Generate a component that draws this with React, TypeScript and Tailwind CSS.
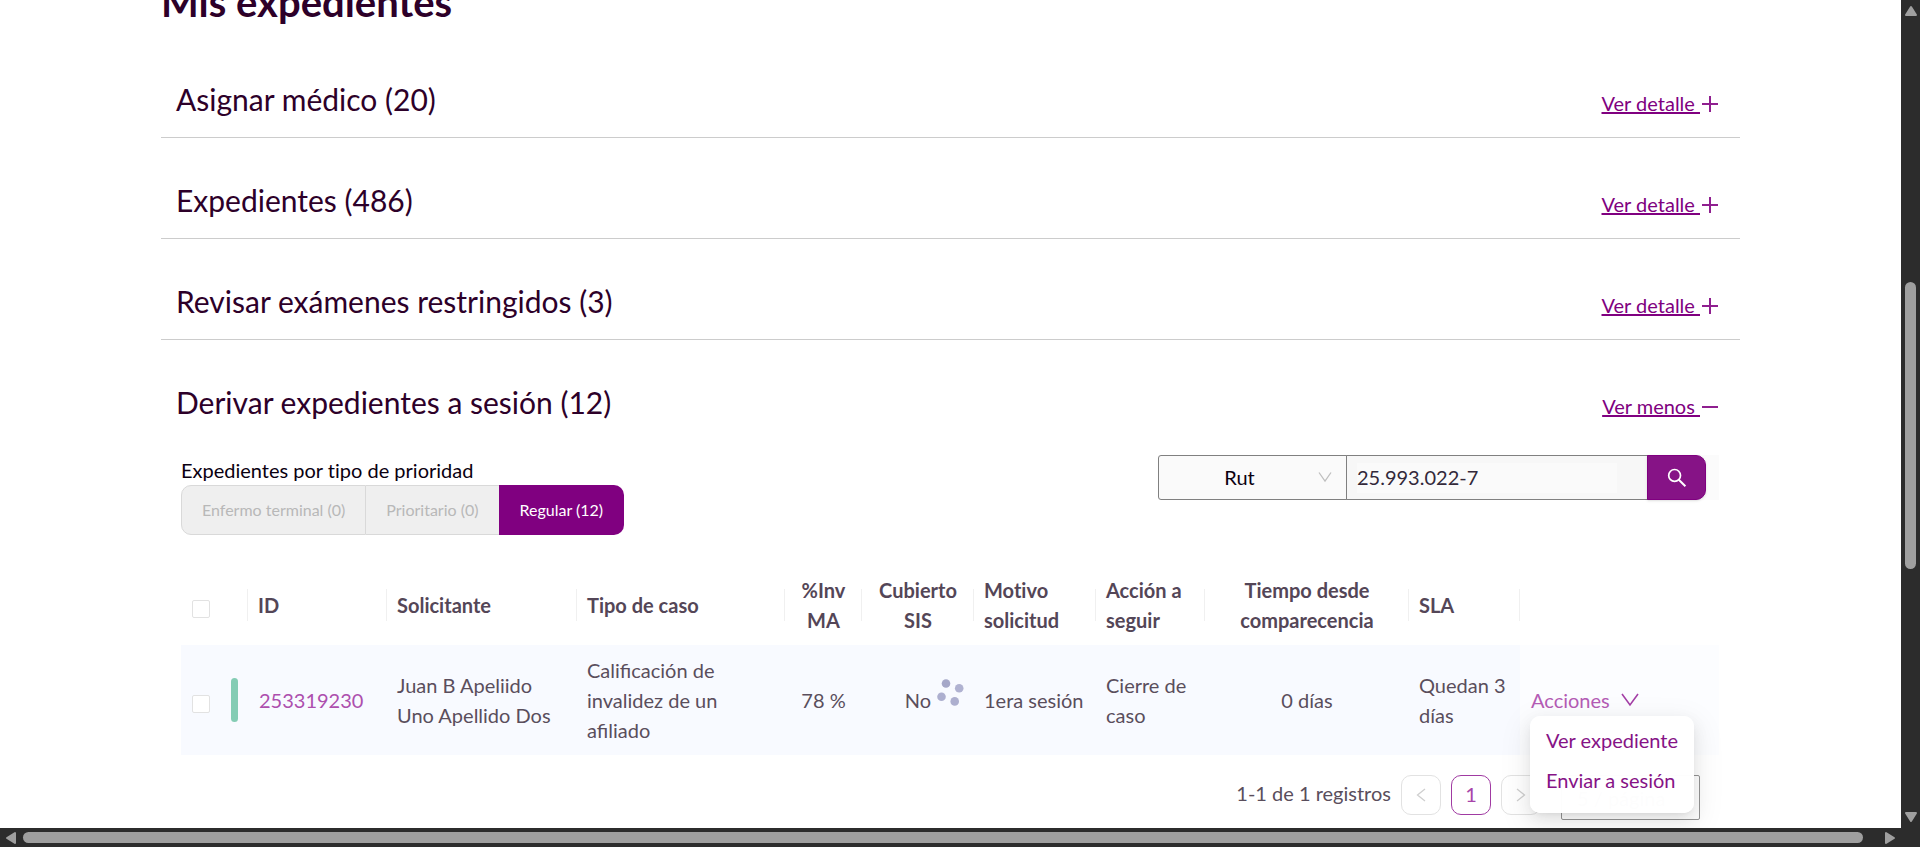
import React from "react";

const collapsed = [
  { title: "Asignar médico (20)" },
  { title: "Expedientes (486)" },
  { title: "Revisar exámenes restringidos (3)" },
];

function PlusIcon() {
  return (
    <svg viewBox="0 0 20 20" className="mt-[5px] h-5 w-5 shrink-0" aria-hidden="true">
      <path d="M2 10H18M10 2V18" stroke="#800080" strokeWidth="2" strokeOpacity="0.88" fill="none" />
    </svg>
  );
}

function MinusIcon() {
  return (
    <svg viewBox="0 0 20 20" className="mt-[5px] h-5 w-5 shrink-0" aria-hidden="true">
      <path d="M2 10H18" stroke="#800080" strokeWidth="2" strokeOpacity="0.88" fill="none" />
    </svg>
  );
}

function SectionHeader({ title, action, open }: { title: string; action: string; open?: boolean }) {
  return (
    <div className="flex items-end justify-between pl-[15px] pr-5 pt-[42px]">
      <h2 className="text-[30px] leading-10 text-[#2d0029]">{title}</h2>
      <a href="#" className="flex h-[30px] items-start text-xl text-[#800080]">
        <span className="whitespace-pre leading-7 underline decoration-2 underline-offset-1">{action + " "}</span>
        {open ? <MinusIcon /> : <PlusIcon />}
      </a>
    </div>
  );
}

function Th({ children, center, last }: { children?: React.ReactNode; center?: boolean; last?: boolean }) {
  return (
    <th className={"relative px-2.5 py-2.5 align-middle font-bold " + (center ? "text-center" : "text-left")}>
      {children}
      {!last && <span className="absolute right-0 top-6 h-8 w-px bg-[#f0f0f0]" />}
    </th>
  );
}

function Check({ label }: { label: string }) {
  return (
    <input
      type="checkbox"
      aria-label={label}
      className="mt-[7px] block h-[18px] w-[18px] appearance-none rounded-[2px] border border-[#e2e2e2] bg-white"
    />
  );
}

function Spinner() {
  return (
    <svg viewBox="0 0 28 28" className="absolute left-[75px] top-[33px] h-7 w-7" aria-label="Cargando">
      <circle cx="9" cy="5.5" r="4.3" fill="#a5a7c8" />
      <circle cx="22.2" cy="10.2" r="4.3" fill="#b0b2d1" />
      <circle cx="4.5" cy="18.7" r="4.3" fill="#adafcf" />
      <circle cx="17.7" cy="23.4" r="4.3" fill="#adafcf" />
    </svg>
  );
}

function Filters() {
  return (
    <div className="flex items-start justify-between pl-5 pr-[21px]">
      <div>
        <p className="text-xl leading-[30px] text-[#0a0010]">Expedientes por tipo de prioridad</p>
        <div className="flex h-[50px] text-base">
          <button disabled className="rounded-l-[10px] border border-[#d9d9d9] bg-[#efefef] px-5 text-[#b8b8b8]">
            Enfermo terminal (0)
          </button>
          <button disabled className="border-y border-[#d9d9d9] bg-[#efefef] px-5 text-[#b8b8b8]">
            Prioritario (0)
          </button>
          <button className="rounded-r-[10px] bg-[#800080] px-[21px] text-white">Regular (12)</button>
        </div>
      </div>
      <form className="flex h-[45px] bg-[#fbfbfb] pr-[13px]">
        <div className="relative w-[189px]">
          <select
            aria-label="Buscar por"
            className="h-full w-full appearance-none rounded-l-[3px] border border-[#808080] bg-[#fafafa] pb-0.5 pl-1.5 pr-8 text-center text-xl text-[#0a0010] [text-align-last:center]"
          >
            <option>Rut</option>
          </select>
          <svg viewBox="0 0 14 12" className="pointer-events-none absolute right-[15px] top-4 h-3 w-3.5" aria-hidden="true">
            <path d="M1 1.5L7 10L13 1.5" fill="none" stroke="#bfbfbf" strokeWidth="1.3" />
          </svg>
        </div>
        <div className="-ml-px flex w-[302px] items-center border border-[#808080] bg-[#f7f7f7] pl-2.5">
          <input
            aria-label="Valor de búsqueda"
            defaultValue="25.993.022-7"
            className="h-[30px] w-[260px] bg-[#fafafa] pb-0.5 text-xl text-[#33293a] outline-none"
          />
        </div>
        <button
          type="button"
          aria-label="Buscar"
          className="-ml-px flex w-[59px] items-center justify-center rounded-r-[10px] border border-[#800080] bg-[#861386] shadow-sm"
        >
          <svg viewBox="0 0 20 20" className="h-5 w-5" aria-hidden="true">
            <circle cx="7.6" cy="7.4" r="5.9" fill="none" stroke="#fff" strokeWidth="1.7" />
            <path d="M11.8 11.7L18.4 18.3" stroke="#fff" strokeWidth="2" />
          </svg>
        </button>
      </form>
    </div>
  );
}

function ActionsMenu() {
  return (
    <div className="absolute left-2.5 top-[71px] z-10 flex h-[97px] w-[164px] flex-col rounded-[10px] bg-white/98 pt-1 shadow-[0_6px_16px_0_rgba(0,0,0,0.08),0_3px_6px_-4px_rgba(0,0,0,0.12),0_9px_28px_8px_rgba(0,0,0,0.05)]">
      <a href="#" className="whitespace-nowrap px-4 text-xl leading-10 text-[#861386]">Ver expediente</a>
      <a href="#" className="whitespace-nowrap px-4 text-xl leading-10 text-[#861386]">Enviar a sesión</a>
    </div>
  );
}

function CasesTable() {
  return (
    <table className="w-full table-fixed border-collapse text-xl leading-[30px] text-[#5a4e5c]">
      <colgroup>
        <col className="w-[40px]" />
        <col className="w-[27px]" />
        <col className="w-[139px]" />
        <col className="w-[190px]" />
        <col />
        <col className="w-[77px]" />
        <col className="w-[112px]" />
        <col className="w-[122px]" />
        <col className="w-[109px]" />
        <col className="w-[204px]" />
        <col className="w-[111px]" />
        <col className="w-[199px]" />
      </colgroup>
      <thead className="text-[#544657]">
        <tr>
          <th className="py-2.5 pl-[11px]"><Check label="Seleccionar todos" /></th>
          <Th />
          <Th>ID</Th>
          <Th>Solicitante</Th>
          <Th>Tipo de caso</Th>
          <Th center>%Inv MA</Th>
          <Th center>Cubierto SIS</Th>
          <Th>Motivo solicitud</Th>
          <Th>Acción a seguir</Th>
          <Th center>Tiempo desde comparecencia</Th>
          <Th>SLA</Th>
          <Th last />
        </tr>
      </thead>
      <tbody>
        <tr className="bg-[#f8faff]">
          <td className="py-2.5 pl-[11px]"><Check label="Seleccionar 253319230" /></td>
          <td className="py-2.5 pl-2.5">
            <div className="h-11 w-[7px] rounded-full bg-[#84ccb4]" />
          </td>
          <td className="py-2.5 pl-[11px]"><a href="#" className="text-[#ad4fae]">253319230</a></td>
          <td className="py-2.5 pl-2.5">Juan B Apeliido<br />Uno Apellido Dos</td>
          <td className="p-2.5 [font-variant-ligatures:normal]">Calificación de invalidez de un afiliado</td>
          <td className="p-2.5 text-center">78 %</td>
          <td className="relative p-2.5 text-center">No<Spinner /></td>
          <td className="whitespace-nowrap py-2.5 pl-2.5">1era sesión</td>
          <td className="p-2.5">Cierre de caso</td>
          <td className="p-2.5 text-center">0 días</td>
          <td className="p-2.5">Quedan 3 días</td>
          <td className="relative bg-[#fcfdff] py-2.5 pl-[11px]">
            <button className="flex items-center gap-[11px] text-[#b45cb5]">
              Acciones
              <svg viewBox="0 0 18 14" className="h-3.5 w-[18px]" aria-hidden="true">
                <path d="M1 1L9 12L17 1" fill="none" stroke="#a43fa6" strokeWidth="1.6" />
              </svg>
            </button>
            <ActionsMenu />
          </td>
        </tr>
      </tbody>
    </table>
  );
}

function Pagination() {
  return (
    <div className="flex items-start justify-end gap-2.5 pr-[19px] pt-5 text-xl">
      <span className="leading-9 text-[#5a4e5c]">1-1 de 1 registros</span>
      <button disabled aria-label="Anterior" className="flex h-10 w-10 items-center justify-center rounded-[10px] border border-[#e2e2e2]">
        <svg viewBox="0 0 10 14" className="h-3.5 w-2.5" aria-hidden="true">
          <path d="M9 1L1.5 7L9 13" fill="none" stroke="#cfcfcf" strokeWidth="1.3" />
        </svg>
      </button>
      <button className="h-10 w-10 rounded-[10px] border border-[#a03aa2] pb-0.5 text-[#a844aa]">1</button>
      <button disabled aria-label="Siguiente" className="flex h-10 w-10 items-center justify-center rounded-[10px] border border-[#e2e2e2]">
        <svg viewBox="0 0 10 14" className="h-3.5 w-2.5" aria-hidden="true">
          <path d="M1 1L8.5 7L1 13" fill="none" stroke="#cfcfcf" strokeWidth="1.3" />
        </svg>
      </button>
      <select
        aria-label="Registros por página"
        className="ml-2.5 h-[45px] w-[139px] appearance-none rounded-[2px] border border-[#959595] bg-white pl-[15px] text-xl text-[#8a808c]"
      >
        <option>5 / página</option>
      </select>
    </div>
  );
}

function Arrow({ d, className }: { d: string; className: string }) {
  return (
    <svg viewBox="0 0 14 14" className={"h-3.5 w-3.5 shrink-0 " + className} aria-hidden="true">
      <path d={d} fill="#9f9f9f" stroke="#9f9f9f" strokeWidth="2" strokeLinejoin="round" />
    </svg>
  );
}

export default function App() {
  return (
    <div className="flex h-screen flex-col overflow-hidden bg-[#2c2c2c] font-['Lato',sans-serif] [font-variant-ligatures:none]">
      <div className="flex min-h-0 flex-1">
        <main className="min-w-0 flex-1 overflow-hidden bg-white px-[161px]">
          <h1 className="-mt-[23px] mb-[10px] text-[40px] font-bold leading-[50px] text-[#2d0029]">Mis expedientes</h1>
          {collapsed.map((s) => (
            <section key={s.title} className="border-b border-[#cccccc] pb-[18px]">
              <SectionHeader title={s.title} action="Ver detalle" />
            </section>
          ))}
          <section>
            <SectionHeader title="Derivar expedientes a sesión (12)" action="Ver menos" open />
            <div className="mt-[33px]">
              <Filters />
            </div>
            <div className="mt-[30px] pl-5 pr-[21px]">
              <CasesTable />
              <Pagination />
            </div>
          </section>
        </main>
        <div className="flex w-[19px] flex-col items-center justify-between py-1">
          <Arrow d="M7 3L12 11H2Z" className="" />
          <div className="flex min-h-0 w-full flex-1 flex-col items-center">
            <div className="flex-[264]" />
            <div className="w-[11px] flex-[287] rounded-full bg-[#9f9f9f]" />
            <div className="flex-[241]" />
          </div>
          <Arrow d="M7 11L12 3H2Z" className="" />
        </div>
      </div>
      <div className="flex h-[19px] items-center pr-[23px]">
        <Arrow d="M3 7L11 2V12Z" className="ml-1 mr-[5px]" />
        <div className="h-[11px] flex-1 rounded-full bg-[#9f9f9f]" />
        <Arrow d="M11 7L3 2V12Z" className="ml-5" />
      </div>
    </div>
  );
}
